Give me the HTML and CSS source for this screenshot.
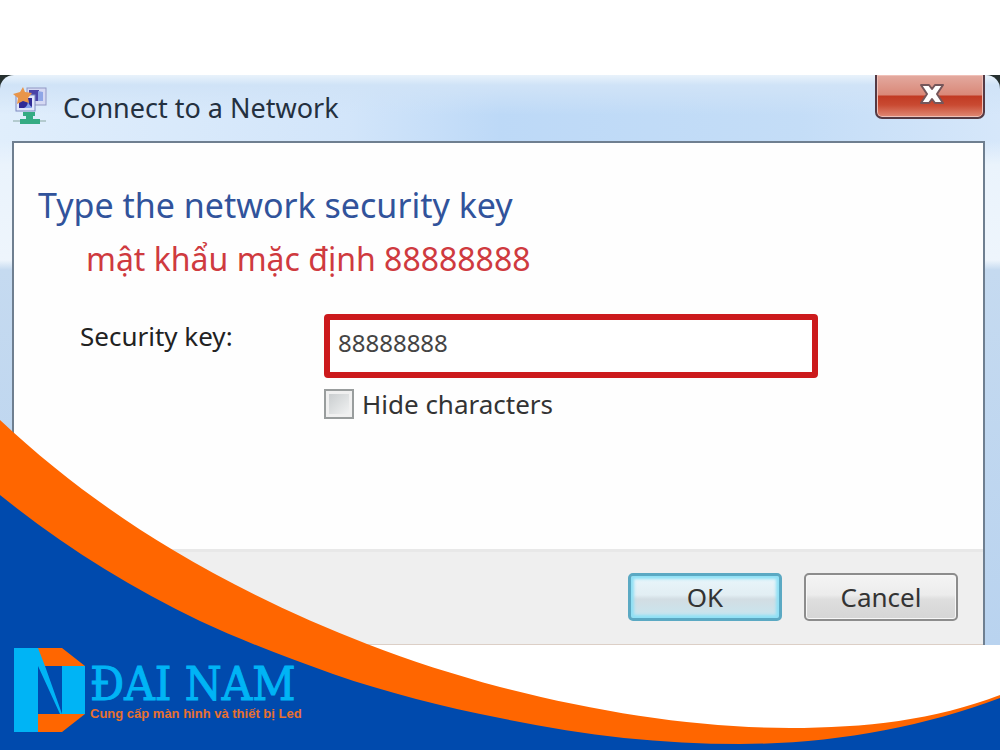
FILE: index.html
```
<!DOCTYPE html>
<html lang="vi">
<head>
    <meta charset="UTF-8">
    <meta name="viewport" content="width=device-width, initial-scale=1.0">
    <title>Connect to a Network</title>
    <link rel="stylesheet" href="styles.css">
</head>
<body>

    <main class="window">
        <div class="frame">
            <header class="titlebar">
                <svg class="net-icon" viewBox="0 0 36 40" aria-hidden="true">
                    <rect x="15" y="2" width="19" height="17" fill="#d5d9f3" stroke="#9197c4"/>
                    <path d="M17 4h10v11H17z" fill="#4a44a8"/>
                    <path d="M26 5l5 1v9h-5z" fill="#8fa6e6"/>
                    <rect x="4" y="9" width="19" height="16" fill="#dfe6fb" stroke="#7c8ac0"/>
                    <path d="M7 12h13v10H7z" fill="#2f2a96"/>
                    <path d="M16 12c0 5 1 7 4 9v1H12c4-2 4-5 4-10z" fill="#86a2ea"/>
                    <path d="M11 1l2 5 7 1-4 5 1 5-6-2-6 3 1-6-5-4 7-2z" fill="#e8954a"/>
                    <path d="M11 26h12v4h-2v3h7v5H8v-5h6v-3h-3z" fill="#35ab83"/>
                    <path d="M1 35h7M28 35h6" stroke="#b4cbcf" stroke-width="2"/>
                </svg>
                <h1>Connect to a Network</h1>
                <button class="close" type="button" aria-label="Close">
                    <svg viewBox="0 0 26 22" aria-hidden="true">
                        <path d="M2 2h8l3 4 3-4h8l-6 9 6 9h-8l-3-4-3 4H2l6-9z" fill="#fff" stroke="#75565a" stroke-width="2" stroke-linejoin="round"/>
                    </svg>
                </button>
            </header>

            <form class="dialog">
                <div class="content">
                    <h2>Type the network security key</h2>
                    <p class="note">mật khẩu mặc định 88888888</p>
                    <div class="row">
                        <label class="key-label" for="key">Security key:</label>
                        <div class="field">
                            <input class="key" id="key" type="text" value="88888888">
                            <label class="hide"><input type="checkbox">Hide characters</label>
                        </div>
                    </div>
                </div>
                <div class="actions">
                    <button class="btn ok" type="button">OK</button>
                    <button class="btn" type="button">Cancel</button>
                </div>
            </form>
        </div>
    </main>

    <svg class="wave" viewBox="0 0 1000 330" preserveAspectRatio="none" aria-hidden="true">
        <path fill="#ff6600" d="M0 0C52 49 111 93 173 130C235 167 300 198 367 224C411 241 455 255 500 267C600 293 700 308 790 308C865 308 935 300 1000 275V330H0z"/>
        <path fill="#004aad" d="M0 75C62 125 127 166 200 201C243 221 288 238 333 254C388 273 444 287 500 298C580 315 660 324 740 324C830 324 920 308 1000 278V330H0z"/>
    </svg>

    <footer class="brand">
        <svg class="logo" viewBox="0 0 71 84" aria-hidden="true">
            <path fill="#ff6600" d="M24 0h24l23 18H24zM24 66h47L48 84H24z"/>
            <path fill="#00b4f5" d="M0 0h24l7 18 17 48h-2L24 18v66H0zM48 18h23v48H48z"/>
        </svg>
        <div class="brand-text">
            <strong>ĐAI NAM</strong>
            <span>Cung cấp màn hình và thiết bị Led</span>
        </div>
    </footer>

</body>
</html>
```
FILE: styles.css
```
* {
    box-sizing: border-box;
}
body {
    position: relative;
    display: flex;
    flex-direction: column;
    min-height: 100vh;
    margin: 0;
    background: #fff;
    font-family: "Noto Sans", "Open Sans", sans-serif;
    color: #222;
}
h1, h2, p {
    margin: 0;
    font-weight: normal;
}

/* window */
.window {
    margin-top: 75px;
    background: #25302f;
}
.frame {
    padding: 0 15px 0 12px;
    border-radius: 14px 14px 0 0;
    background:
        linear-gradient(to bottom, #e9f2fb 0, #d0e3f7 10px, transparent 40px),
        linear-gradient(to bottom, transparent 66px, #eaf3fc 90px, #eef5fc 185px, #c5daf0 195px, #b9d3ef 100%),
        linear-gradient(to right, #e0eefc 0, #d2e5fa 35%, #bdd9f7 50%, #c4ddf7 80%, #d6e7fa 100%);
}
.titlebar {
    display: flex;
    align-items: center;
    height: 66px;
}
.net-icon {
    width: 36px;
    height: 40px;
    margin-top: -4px;
}
.titlebar h1 {
    flex: 1;
    margin-left: 15px;
    font-size: 27px;
    line-height: 36px;
    color: #24303f;
}
.close {
    align-self: flex-start;
    display: flex;
    align-items: center;
    justify-content: center;
    width: 110px;
    height: 44px;
    padding: 0 0 4px 4px;
    border: 2px solid #543a44;
    border-top: 0;
    border-radius: 0 0 7px 7px;
    background: linear-gradient(to bottom, #e3aaa0 0, #d98878 20px, #c13a23 21px, #c94a32 30px, #e08a76 42px);
    box-shadow: inset 0 0 0 1px #f0c0b8;
}
.close svg {
    width: 26px;
    height: 22px;
}

/* dialog */
.dialog {
    border: 2px solid #6f7f90;
    border-bottom: 0;
    background: #fefefe;
}
.content {
    min-height: 406px;
    padding: 38px 24px 0;
}
.content h2 {
    font-size: 34px;
    line-height: 48px;
    color: #31539b;
}
.note {
    padding-left: 48px;
    font-size: 32px;
    line-height: 60px;
    color: #cf3a3f;
}
.row {
    display: flex;
    padding-left: 42px;
    margin-top: 25px;
}
.key-label {
    width: 244px;
    font-size: 26px;
    line-height: 44px;
}
.field {
    flex: 1;
    max-width: 494px;
}
.key {
    display: block;
    width: 100%;
    height: 64px;
    padding: 0 8px 8px;
    border: 6px solid #cc1a1c;
    border-radius: 4px;
    background: #fff;
    font: 24px "Noto Sans", sans-serif;
    color: #444;
}
.hide {
    display: flex;
    align-items: center;
    gap: 8px;
    margin-top: 8px;
    font-size: 26px;
    line-height: 36px;
    color: #333;
}
.hide input {
    appearance: none;
    width: 30px;
    height: 30px;
    margin: 0;
    border: 2px solid #999d9d;
    background: linear-gradient(135deg, #c4c8ca, #f6f7f7);
    box-shadow: inset 0 0 0 3px #f0f0f0;
}
.actions {
    display: flex;
    justify-content: flex-end;
    gap: 22px;
    padding: 21px 25px 23px;
    border-top: 3px solid #e8e8e8;
    border-bottom: 1px solid #dccfc6;
    background: #efefef;
}
.btn {
    width: 154px;
    height: 48px;
    padding: 0;
    border: 2px solid #8c8c8c;
    border-radius: 5px;
    background: linear-gradient(to bottom, #f4f4f4 0, #ececec 45%, #dedede 55%, #d5d5d5 100%);
    box-shadow: inset 0 0 0 1px #f7f7f7;
    font: 26px "Noto Sans", sans-serif;
    color: #333;
}
.ok {
    border: 3px solid #5ba9c3;
    background: linear-gradient(to bottom, #e9f6fb 0, #e2eef3 45%, #d2dde3 55%, #c8e6f0 100%);
    box-shadow: inset 0 0 3px 3px #8fe0f5;
}

/* brand strip */
.wave {
    position: absolute;
    left: 0;
    bottom: 0;
    width: 100%;
    height: 330px;
}
.brand {
    position: absolute;
    left: 14px;
    bottom: 18px;
    display: flex;
    gap: 5px;
}
.logo {
    width: 71px;
    height: 84px;
}
.brand-text {
    display: flex;
    flex-direction: column;
    padding-top: 14px;
    white-space: nowrap;
}
.brand-text strong {
    font: 47px/44px "DejaVu Serif Condensed", "DejaVu Serif", serif;
    color: #00b4f5;
    -webkit-text-stroke: 1px #00b4f5;
}
.brand-text span {
    font: bold 13px/16px "Liberation Sans", sans-serif;
    color: #e8702f;
}
```
